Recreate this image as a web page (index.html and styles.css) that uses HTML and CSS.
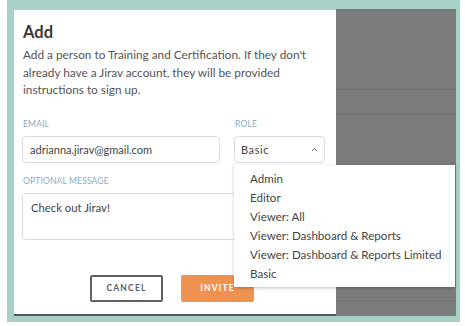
FILE: index.html
```html
<!DOCTYPE html>
<html>
<head>
<meta charset="utf-8">
<link rel="stylesheet" href="styles.css">
</head>
<body>
<div class="frame">
  <div class="window">
    <div class="dialog">
      <h1 class="title">Add</h1>
      <p class="intro">Add a person to Training and Certification. If they don't already have a Jirav account, they will be provided instructions to sign up.</p>
      <div class="form-row">
        <div class="field field-email">
          <label class="label">EMAIL</label>
          <div class="input">adrianna.jirav@gmail.com</div>
        </div>
        <div class="field field-role">
          <label class="label">ROLE</label>
          <div class="select">
            <span class="select-value">Basic</span>
            <svg class="chevron" width="7" height="5" viewBox="0 0 7 5"><polyline points="1,4 3.5,1.5 6,4" fill="none" stroke="#777" stroke-width="1"/></svg>
          </div>
          <ul class="menu">
            <li class="menu-item">Admin</li>
            <li class="menu-item">Editor</li>
            <li class="menu-item">Viewer: All</li>
            <li class="menu-item">Viewer: Dashboard &amp; Reports</li>
            <li class="menu-item">Viewer: Dashboard &amp; Reports Limited</li>
            <li class="menu-item">Basic</li>
          </ul>
        </div>
      </div>
      <div class="field field-message">
        <label class="label">OPTIONAL MESSAGE</label>
        <div class="textarea">Check out Jirav!</div>
      </div>
      <div class="actions">
        <button class="btn btn-cancel">CANCEL</button>
        <button class="btn btn-invite">INVITE</button>
      </div>
    </div>
    <div class="backdrop">
      <div class="bd-block bd-a"></div>
      <div class="bd-block bd-b"></div>
      <div class="bd-block bd-c"></div>
    </div>
  </div>
</div>
</body>
</html>
```

FILE: styles.css
```css
* { box-sizing: border-box; }
html, body { margin: 0; padding: 0; background: #fff; }
body { font-family: "Lato", "Open Sans", sans-serif; }

.frame {
  margin-left: 7px;
  width: 453px;
  height: 322px;
  background: #a8cfc8;
  padding: 9px 4px 6px 7px;
}
.window {
  display: flex;
  height: 307px;
}
.dialog {
  position: relative;
  width: 322px;
  background: #fff;
  border-top: 1px solid #c9c9c9;
  border-bottom: 2px solid #55585b;
  padding: 11px 11px 0 8px;
}
.title {
  margin: 0 0 0 1px;
  font-size: 16.5px;
  font-weight: 700;
  color: #3a3a3a;
  line-height: 22px;
}
.intro {
  margin: 3px 0 0 1px;
  font-size: 11.8px;
  line-height: 17.5px;
  color: #555;
  width: 290px;
}
.form-row {
  display: flex;
  gap: 14px;
  margin-top: 20px;
}
.field { display: flex; flex-direction: column; }
.field-email { width: 198px; }
.field-role { width: 91px; position: relative; }
.label {
  font-size: 8.6px;
  color: #88aec3;
  line-height: 11px;
  margin: 0 0 6px 1px;
  letter-spacing: 0.1px;
}
.input, .select, .textarea {
  border: 1px solid #dcdcdc;
  border-radius: 4px;
  font-size: 11px;
  color: #444;
  background: #fff;
}
.input {
  height: 27px;
  line-height: 25px;
  padding-left: 7px;
}
.select {
  height: 27px;
  display: flex;
  align-items: center;
  justify-content: space-between;
  padding: 0 6px 0 6px;
}
.select-value { letter-spacing: 0.6px; }
.chevron { display: block; }
.menu {
  position: absolute;
  top: 46px;
  left: 0;
  width: 221px;
  height: 122px;
  margin: 0;
  padding: 4px 0 0 16px;
  list-style: none;
  background: #fff;
  box-shadow: 0 1px 3px rgba(0,0,0,0.25);
  z-index: 5;
}
.menu-item {
  font-size: 11.6px;
  color: #444;
  line-height: 19px;
}
.field-message { margin-top: 13px; width: 303px; }
.field-message .label { margin-bottom: 6px; }
.textarea {
  height: 47px;
  padding: 6px 8px;
  line-height: 16px;
  font-size: 11.3px;
}
.actions {
  display: flex;
  justify-content: center;
  gap: 18px;
  margin-top: 35px;
  margin-left: -3px;
}
.btn {
  width: 73px;
  height: 27px;
  font-family: "Lato", sans-serif;
  font-size: 8.5px;
  font-weight: 700;
  letter-spacing: 1.2px;
  border-radius: 2px;
  padding: 0;
}
.btn-cancel {
  background: #fff;
  border: 2px solid #5d6165;
  color: #5a5e62;
}
.btn-invite {
  background: #ef914f;
  border: none;
  color: #fff;
}
.backdrop {
  flex: 1;
  background: #7b7b7b;
  display: flex;
  flex-direction: column;
}
.bd-block { border-bottom: 1px solid #727272; }
.bd-a { height: 81px; }
.bd-b { height: 25px; }
.bd-c { height: 186px; }
```
